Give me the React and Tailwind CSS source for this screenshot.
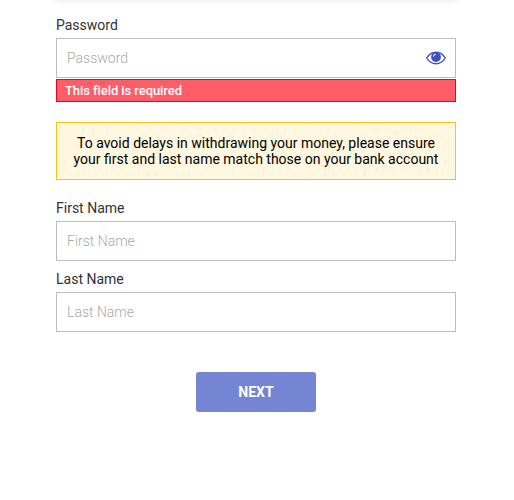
function EyeIcon() {
  return (
    <svg className="h-[14px] w-5" viewBox="0 0 20 14" fill="none" aria-hidden="true">
      <path
        d="M0.7 7C3 3.2 6.2 1.2 10 1.2S17 3.2 19.3 7C17 10.8 13.8 12.8 10 12.8S3 10.8 0.7 7Z"
        stroke="#3f51c1"
        strokeWidth="1.4"
        strokeLinejoin="round"
      />
      <circle cx="10" cy="6" r="4.9" fill="#3f4fc4" />
      <path d="M7.5 5.2C7.7 4.2 8.3 3.5 9.3 3.3" stroke="#fff" strokeWidth="1.1" strokeLinecap="round" />
    </svg>
  );
}

function Field({ label, type = "text", icon }) {
  return (
    <label className="block">
      <span className="block h-[21px] text-sm leading-4 text-[#333]">{label}</span>
      <span className="flex h-10 items-center border border-[#bdbdbd] bg-white pr-[9px] pl-2.5">
        <input
          type={type}
          placeholder={label}
          className="min-w-0 flex-1 bg-transparent text-sm font-light outline-none placeholder:text-[#aaa]"
        />
        {icon}
      </span>
    </label>
  );
}

export default function App() {
  return (
    <main className="h-[500px] w-[514px] overflow-hidden bg-white font-['Roboto',sans-serif]">
      <form className="ml-14 flex w-[400px] flex-col">
        <div className="-mt-10 h-[39px] bg-white shadow-[0_0_8px_rgba(0,0,0,0.12)]" />
        <div className="mt-[18px]">
          <Field label="Password" type="password" icon={<EyeIcon />} />
        </div>
        <div className="mt-px h-[23px] border border-[#f00028] bg-[#ff5e68] pl-2 text-[13px] leading-[21px] font-medium tracking-[-0.07px] text-white">
          This field is required
        </div>
        <div className="mt-5 flex h-[58px] items-center justify-center border border-[#ffc107] bg-[#fff7df] text-center text-sm leading-4 text-black">
          <p>
            To avoid delays in withdrawing your money, please ensure
            <br />
            your first and last name match those on your bank account
          </p>
        </div>
        <div className="mt-5 flex flex-col gap-2.5">
          <Field label="First Name" />
          <Field label="Last Name" />
        </div>
        <button
          type="button"
          className="mt-10 h-10 w-[120px] self-center rounded-[3px] bg-[#7485d2] text-sm font-bold text-white"
        >
          NEXT
        </button>
      </form>
    </main>
  );
}
